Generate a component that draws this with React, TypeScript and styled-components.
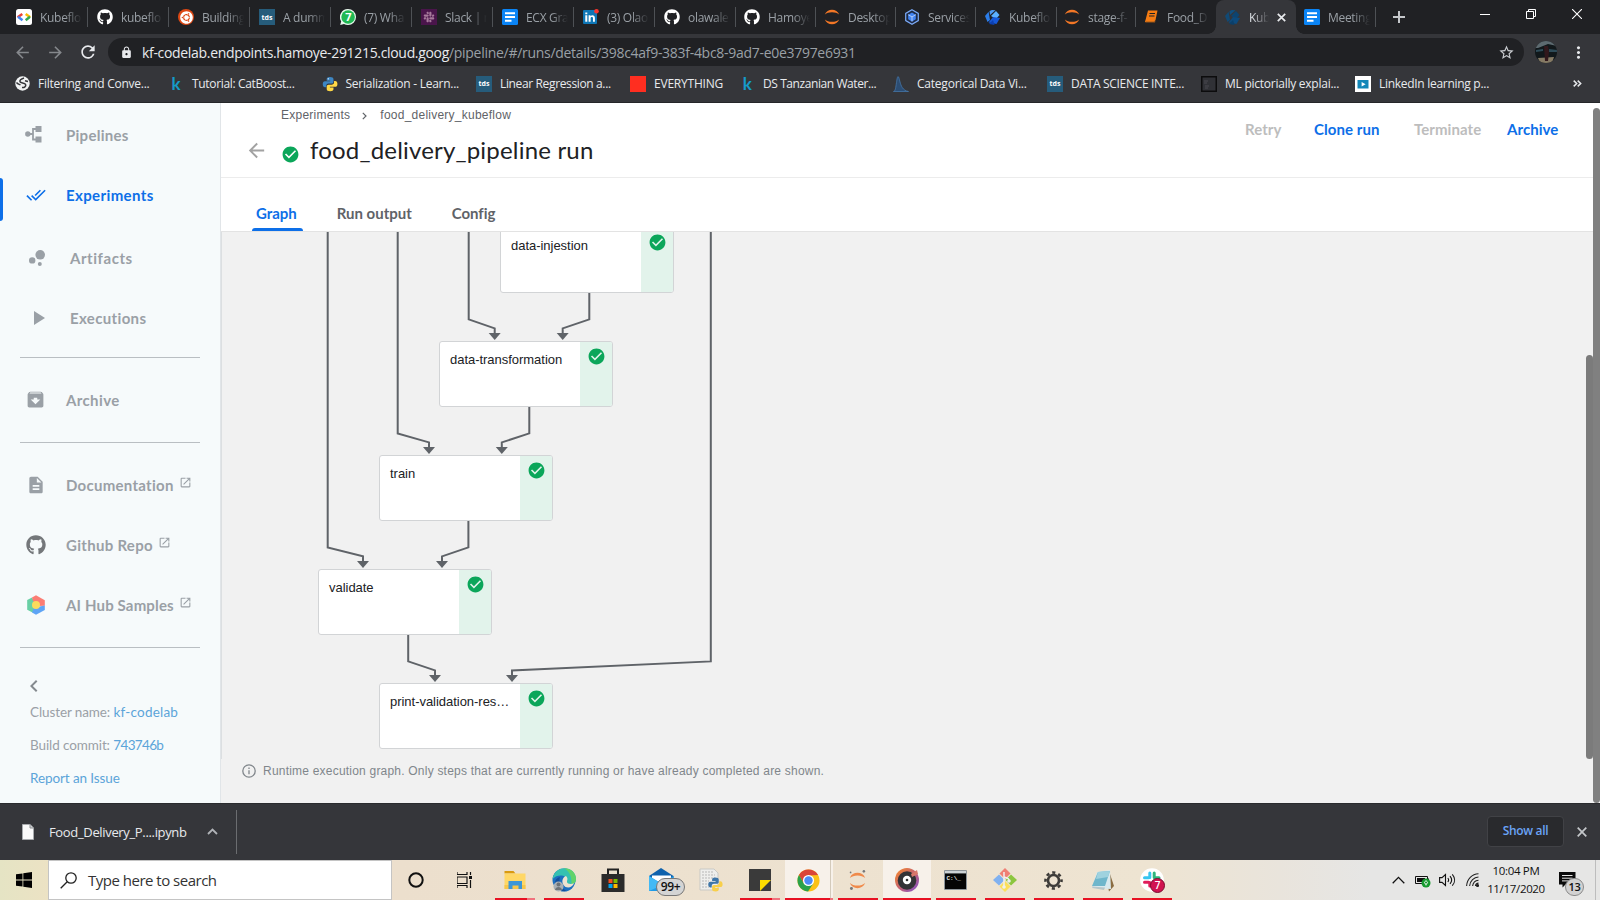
import React from "react";
import styled, { createGlobalStyle, css } from "styled-components";
import { FaGithub, FaUbuntu, FaSlack } from "react-icons/fa";
import {
  MdDoneAll, MdBubbleChart, MdPlayArrow, MdArchive, MdDescription, MdOpenInNew, MdCheckCircle,
  MdArrowBack, MdArrowForward, MdRefresh, MdLock, MdStarBorder, MdChevronLeft, MdMoreVert,
} from "react-icons/md";

const UI = `"Open Sans", "Noto Sans", sans-serif`;
const BRAND = `Lato, sans-serif`;
const BODY = `"Liberation Sans", Arial, sans-serif`;

const Global = createGlobalStyle`
  * { box-sizing: border-box; }
  body { margin: 0; overflow: hidden; background: #fff; }
  svg { display: block; flex: none; }
`;

const Screen = styled.div`
  width: 1600px;
  height: 900px;
  display: flex;
  flex-direction: column;
  overflow: hidden;
  white-space: nowrap;
  font-family: ${UI};
`;

/* ---------- browser chrome ---------- */

const TabStrip = styled.div`
  height: 34px;
  flex: none;
  display: flex;
  background: #202124;
  padding-left: 8px;
`;

const TabItem = styled.div<{ $wide?: boolean; $active?: boolean }>`
  position: relative;
  width: ${p => (p.$wide ? 81 : 80)}px;
  flex: none;
  display: flex;
  align-items: center;
  gap: 8px;
  padding-left: 8px;
  color: ${p => (p.$active ? "#dee1e6" : "#9aa0a6")};
  font-size: 12px;
  letter-spacing: -0.3px;
  ${p => p.$active && css`
    background: #35363a;
    border-radius: 8px 8px 0 0;
    &::before, &::after {
      content: "";
      position: absolute;
      bottom: 0;
      width: 8px;
      height: 8px;
    }
    &::before { left: -8px; background: radial-gradient(circle at 0 0, #202124 7.5px, #35363a 8px); }
    &::after { right: -8px; background: radial-gradient(circle at 100% 0, #202124 7.5px, #35363a 8px); }
  `}
`;

const TabRule = styled.span`
  width: 1px;
  height: 20px;
  flex: none;
  margin-left: -3px;
  background: #4e5155;
`;

const TabTitle = styled.span<{ $w: number }>`
  width: ${p => p.$w}px;
  flex: none;
  mask-image: linear-gradient(to right, #000 ${p => p.$w - 17}px, transparent ${p => p.$w}px);
`;

const NewTab = styled.div`
  display: flex;
  align-items: center;
  margin-left: 17px;
`;

const WindowButtons = styled.div`
  display: flex;
  gap: 36px;
  margin-left: auto;
  margin-right: 18px;
  padding-top: 9px;
`;

const Toolbar = styled.div`
  height: 32px;
  flex: none;
  display: flex;
  align-items: center;
  padding: 4px 0 0 13px;
  background: #35363a;
`;

const NavIcons = styled.div`
  width: 95px;
  display: flex;
  align-items: center;
  gap: 14px;
  color: #85888c;
  & > :last-child { color: #e8eaed; margin-left: -1px; }
`;

const Omnibox = styled.div`
  width: 1416px;
  height: 28px;
  display: flex;
  align-items: center;
  padding: 0 9px 0 12px;
  border-radius: 14px;
  background: #202124;
  color: #e8eaed;
`;

const Host = styled.span`
  margin-left: 9px;
  font-size: 14px;
  letter-spacing: -0.323px;
  color: #e8eaed;
`;

const Path = styled.span`
  flex: 1;
  font-size: 14px;
  letter-spacing: -0.29px;
  color: #9aa0a6;
`;

const Avatar = styled.span`
  width: 22px;
  height: 22px;
  margin: 0 12px 0 11px;
  border-radius: 50%;
  overflow: hidden;
`;

const Bookmarks = styled.div`
  height: 37px;
  flex: none;
  display: flex;
  align-items: center;
  background: #35363a;
  border-bottom: 1px solid #252629;
  padding: 0 0 1px 14px;
  color: #e8eaed;
`;

const Bookmark = styled.div<{ $w: number; $ls: number }>`
  width: ${p => p.$w}px;
  display: flex;
  align-items: center;
  gap: 8px;
  font-size: 12px;
  letter-spacing: ${p => p.$ls}px;
`;

const Overflow = styled.div`
  margin-left: auto;
  margin-right: 18px;
`;

/* ---------- favicons made of simple boxes ---------- */

const Tile = styled.span<{ $bg: string; $fg?: string; $round?: number }>`
  width: 16px;
  height: 16px;
  flex: none;
  display: flex;
  align-items: center;
  justify-content: center;
  border-radius: ${p => p.$round ?? 0}px;
  background: ${p => p.$bg};
  color: ${p => p.$fg ?? "#fff"};
  font-size: 7px;
  font-weight: 700;
  letter-spacing: 0;
  line-height: 1;
`;

const Kaggle = styled.span`
  width: 16px;
  flex: none;
  text-align: center;
  font: 700 17px/16px ${BRAND};
  color: #159bc9;
`;

/* ---------- page ---------- */

const Page = styled.div`
  height: 701px;
  flex: none;
  display: flex;
  border-bottom: 1px solid #2a2b2e;
`;

const Sidebar = styled.nav`
  width: 221px;
  flex: none;
  padding-top: 2px;
  background: #f6fafb;
  border-right: 1px solid #e1e5e8;
  font-family: ${BRAND};
`;

const NavItem = styled.div<{ $active?: boolean; $indent?: boolean; $top?: number; $ls?: number }>`
  position: relative;
  height: 60px;
  margin-top: ${p => p.$top ?? 0}px;
  display: flex;
  align-items: center;
  padding: 0 0 1px ${p => (p.$indent ? 30 : 26)}px;
  font-size: 15px;
  font-weight: 700;
  letter-spacing: ${p => p.$ls ?? 0.27}px;
  color: ${p => (p.$active ? "#0d6fe8" : "#9aa0a6")};
  ${p => p.$active && css`
    &::before {
      content: "";
      position: absolute;
      left: 0;
      top: 13px;
      width: 3px;
      height: 43px;
      border-radius: 0 4px 4px 0;
      background: #0d6fe8;
    }
  `}
`;

const NavGlyph = styled.span<{ $pull?: number }>`
  width: ${p => 20 + (p.$pull ?? 0)}px;
  height: 20px;
  margin-right: 20px;
  margin-left: ${p => -(p.$pull ?? 0)}px;
  padding-right: ${p => p.$pull ?? 0}px;
  display: flex;
  align-items: center;
  justify-content: center;
`;

const External = styled.span`
  margin: -5px 0 0 5px;
`;

const Rule = styled.div<{ $top: number }>`
  width: 180px;
  height: 1px;
  margin: ${p => p.$top}px 0 0 20px;
  background: #b9bec2;
`;

const Collapse = styled.div`
  height: 24px;
  margin: 26px 0 0 22px;
  color: #858a8f;
`;

const Meta = styled.div<{ $ls?: number }>`
  height: 33px;
  padding-left: 30px;
  font-size: 13.5px;
  line-height: 29px;
  letter-spacing: -0.1px;
  color: #9aa0a6;
  a { color: #5ba4d9; letter-spacing: ${p => p.$ls ?? -0.1}px; }
`;

const Main = styled.main`
  width: 1372px;
  flex: none;
  display: flex;
  flex-direction: column;
  background: #fff;
`;

const Header = styled.header`
  height: 75px;
  display: flex;
  justify-content: space-between;
  border-bottom: 1px solid #ececec;
`;

const Heading = styled.div`
  padding-left: 24px;
`;

const Crumbs = styled.div`
  height: 25px;
  display: flex;
  align-items: center;
  padding-left: 36px;
  font: 12px/25px ${BODY};
  letter-spacing: 0.24px;
  color: #5f6368;
  svg { margin: 0 13px 0 12px; }
`;

const TitleRow = styled.div`
  height: 44px;
  display: flex;
  align-items: center;
  color: #a2a2a2;
`;

const Status = styled.span`
  margin: 8px 10px 0 13px;
  color: #0ba65a;
`;

const Title = styled.h1`
  margin: 0;
  font: 400 24px/30px ${BRAND};
  letter-spacing: 0.19px;
  color: #202124;
`;

const Actions = styled.div`
  display: flex;
  padding-right: 34px;
`;

const Action = styled.span<{ $off?: boolean; $w: number }>`
  width: ${p => p.$w}px;
  font: 700 15px/52px ${BRAND};
  letter-spacing: 0.06px;
  color: ${p => (p.$off ? "#bdbdbd" : "#0d6fe8")};
`;

const Tabs = styled.div`
  height: 54px;
  display: flex;
  align-items: flex-end;
  gap: 31px;
  padding-left: 31px;
  border-bottom: 1px solid #e3e3e3;
`;

const PageTab = styled.span<{ $active?: boolean }>`
  position: relative;
  height: 36px;
  padding: 0 5px 0 4px;
  font: 700 15px/37px ${BRAND};
  letter-spacing: -0.02px;
  color: ${p => (p.$active ? "#0d6fe8" : "#5f6368")};
  ${p => p.$active && css`
    &::after {
      content: "";
      position: absolute;
      left: 0;
      right: -1px;
      bottom: 0;
      height: 3px;
      border-radius: 3px 3px 0 0;
      background: #0d6fe8;
    }
  `}
`;

const GraphPane = styled.section`
  flex: 1;
  display: flex;
  flex-direction: column;
  background: #f1f1f1;
`;

const Canvas = styled.div`
  position: relative;
  height: 527px;
  overflow: hidden;
  border-left: 1px solid #dcdfe1;
`;

const Node = styled.div<{ $x: number; $y: number }>`
  position: absolute;
  left: ${p => p.$x}px;
  top: ${p => p.$y}px;
  width: 174px;
  height: 66px;
  display: flex;
  justify-content: space-between;
  border: 1px solid #d2d4d6;
  border-radius: 3px;
  background: #fff;
  overflow: hidden;
`;

const NodeName = styled.span`
  padding: 9px 0 0 10px;
  font: 13px/18px ${BODY};
  letter-spacing: -0.03px;
  color: #202124;
`;

const NodeState = styled.span`
  width: 32px;
  padding: 4.5px 0 0 6.5px;
  background: #e2f3eb;
  color: #0ba65a;
`;

const Note = styled.div`
  display: flex;
  align-items: center;
  gap: 7px;
  height: 24px;
  padding-left: 21px;
  font: 12px/24px ${BODY};
  letter-spacing: 0.21px;
  color: #80868b;
`;

const Gutter = styled.div<{ $top: number; $h: number; $c: string }>`
  width: 7px;
  height: ${p => p.$h}px;
  flex: none;
  margin-top: ${p => p.$top}px;
  border-radius: 4px;
  background: ${p => p.$c};
`;

const InnerScroll = styled(Gutter)`
  position: absolute;
  right: 0;
  top: 0;
`;

/* ---------- download shelf ---------- */

const Shelf = styled.div`
  height: 56px;
  flex: none;
  display: flex;
  align-items: center;
  background: #35363a;
  padding: 0 0 1px 22px;
  color: #e8eaed;
`;

const FileName = styled.span`
  width: 158px;
  margin-left: 15px;
  font-size: 13px;
  letter-spacing: -0.34px;
`;

const ShelfRule = styled.span`
  width: 1px;
  height: 44px;
  margin-left: 18px;
  background: #6b6d70;
`;

const ShowAll = styled.span`
  width: 77px;
  height: 31px;
  margin: 0 13px 0 auto;
  border: 1px solid #414246;
  border-radius: 4px;
  background: #292a2d;
  text-align: center;
  font-size: 12px;
  font-weight: 600;
  line-height: 28px;
  letter-spacing: -0.3px;
  color: #6ba4f7;
`;

const ShelfClose = styled.span`
  margin-right: 13px;
`;

/* ---------- taskbar ---------- */

const Taskbar = styled.div`
  height: 40px;
  flex: none;
  display: flex;
  background: linear-gradient(to right, #e5e4c4 0, #ece2c4 48px, #ecdfcd 400px, #eee4d2 1150px, #e9e4dc 1280px, #e6e6e5 1370px);
`;

const Start = styled.div`
  width: 48px;
  display: flex;
  align-items: center;
  justify-content: center;
`;

const SearchBox = styled.div`
  width: 344px;
  display: flex;
  align-items: center;
  gap: 11px;
  padding-left: 11px;
  border: 1px solid #c4c4c4;
  background: #fff;
  font-size: 15px;
  letter-spacing: -0.5px;
  color: #333;
`;

const Apps = styled.div`
  display: flex;
`;

const AppCell = styled.div<{ $w?: number; $lit?: boolean }>`
  position: relative;
  width: ${p => p.$w ?? 49}px;
  display: flex;
  align-items: center;
  justify-content: center;
  ${p => p.$lit && css`background: linear-gradient(to right, transparent 1px, #f7f1ea 1px);`}
`;

const Running = styled.span<{ $wide?: boolean; $more?: boolean }>`
  position: absolute;
  bottom: 0;
  left: ${p => (p.$wide ? 1 : 5)}px;
  width: ${p => (p.$wide ? 48 : 40)}px;
  height: 2px;
  background: linear-gradient(to right, #e81123 ${p => (p.$more ? (p.$wide ? 93 : 80) : 100)}%, #f0727d ${p => (p.$more ? (p.$wide ? 93 : 80) : 100)}%);
`;

const StackEdge = styled.span`
  position: absolute;
  right: 2px;
  top: 0;
  width: 1px;
  height: 38px;
  background: #d3cabb;
`;

const Pill = styled.span<{ $x: number; $y: number; $w: number; $h: number; $bg: string; $fg: string; $line: string; $fs: number }>`
  position: absolute;
  left: ${p => p.$x}px;
  top: ${p => p.$y}px;
  width: ${p => p.$w}px;
  height: ${p => p.$h}px;
  border: 1px solid ${p => p.$line};
  border-radius: 10px;
  background: ${p => p.$bg};
  color: ${p => p.$fg};
  text-align: center;
  font-size: ${p => p.$fs}px;
  font-weight: 600;
  line-height: ${p => p.$h - 2}px;
  letter-spacing: -0.3px;
`;

const Tray = styled.div`
  position: relative;
  display: flex;
  align-items: center;
  margin-left: auto;
  padding-right: 19px;
`;

const Clock = styled.div`
  width: 60px;
  margin: 0 13px 0 7px;
  text-align: center;
  font-size: 11.5px;
  line-height: 18px;
  letter-spacing: -0.33px;
  color: #111;
`;

const DesktopEdge = styled.span`
  width: 1px;
  margin-right: 4px;
  background: #bdbdbd;
`;

/* ---------- drawings ---------- */

const Docs = () => (
  <svg width="16" height="16" viewBox="0 0 16 16"><rect width="16" height="16" rx="1.5" fill="#0a84f5" /><path d="M3 4.2h10M3 8h10M3 11.8h6.5" stroke="#fff" strokeWidth="1.9" /></svg>
);
const Jupyter = ({ s = 16, dots = false }) => (
  <svg width={s} height={s} viewBox="0 0 16 16" overflow="visible">
    <path d="M.8 5.6C2 2.4 4.800.8 8 .8s6 1.600 7.200 4.800C13.400 4 11 3.200 8 3.200S2.600 4 .8 5.600zM.8 10.400C2 13.600 4.800 15.200 8 15.200s6-1.600 7.200-4.800C13.400 12 11 12.800 8 12.800S2.600 12 .8 10.400z" fill={dots ? "#f08a4b" : "#f37726"} />
    {dots && <g fill="#76777a"><circle cx="14" cy="-.6" r="1.200" /><circle cx="1.500" cy=".4" r=".8" /><circle cx="2.300" cy="15.600" r="1.400" /></g>}
  </svg>
);
const Kubeflow = ({ dim = false }) => (
  <svg width="17" height="17" viewBox="0 0 17 17">
    <path d="M8 1l3.500.3L6 6 5.500 2z" fill={dim ? "#0f4f80" : "#4d9bf5"} />
    <path d="M1 7l3.600-4.300L6 11 3.500 13z" fill={dim ? "#114a75" : "#2b7de9"} />
    <path d="M7 7l5-5 3.500 4L12 10z" fill={dim ? "#0c4471" : "#5cb0ff"} />
    <path d="M4.500 13.500L9 8l7 1-3.500 6z" fill={dim ? "#0d4a7c" : "#1658d8"} />
    <path d="M5 15l4-4 1.500 5z" fill={dim ? "#0b3f69" : "#0c3fb0"} />
  </svg>
);
const CloudMark = () => (
  <svg width="16" height="16" viewBox="0 0 16 16"><rect width="16" height="16" rx="2.500" fill="#fff" />
    <g fill="none" strokeWidth="2.500"><path d="M1.600 8.200L6.300 5" stroke="#ea4335" /><path d="M2 7.800L6.500 11.200" stroke="#4285f4" /><path d="M9.700 5l4.500 3.300" stroke="#fbbc04" /><path d="M14 7.800l-4.300 3.400" stroke="#34a853" /></g></svg>
);
const LinkedIn = () => (
  <svg width="16" height="16" viewBox="0 0 16 16"><rect y="1" width="14" height="14" rx="1" fill="#0e76b5" />
    <path d="M2.300 6.300h2v6.400h-2zM2.300 3.400h2v1.900h-2zM5.600 6.300h1.900v1C8.600 5.700 11.900 5.700 11.900 9v3.700H10V9.300c0-1.900-2.400-1.800-2.400 0v3.400h-2z" fill="#fff" /><circle cx="13.500" cy="2.300" r="2.300" fill="#f5352f" /></svg>
);
const Services = () => (
  <svg width="16" height="16" viewBox="0 0 16 16"><path d="M8 .8l6.300 3.600v7.200L8 15.200l-6.300-3.600V4.400z" fill="#1d2a44" stroke="#7baaf7" strokeWidth="1.200" /><path d="M8 3.500l3.800 2.200v4.500L8 12.500l-3.800-2.300V5.700z" fill="#4285f4" /><path d="M4.200 5.700L8 7.900l3.800-2.200M8 7.900v4.600" stroke="#aecbfa" fill="none" /></svg>
);
const Notebook = () => (
  <svg width="15" height="16" viewBox="0 0 15 16"><path d="M4 1.500h9.500L11 13.500H2.200c-1.500 0-1.500-1.800-.8-2z" fill="#f57c13" /><path d="M5.500 4.500h5.500M5 7h5.500" stroke="#202124" strokeWidth="1" /><path d="M1.500 13.200h9.300l.7-2" stroke="#202124" fill="none" strokeWidth=".6" /></svg>
);
const WhatsApp = () => (
  <svg width="16" height="16" viewBox="0 0 16 16"><path d="M8 0a8 8 0 0 1 0 16c-1.500 0-2.800-.4-4-1L.2 16l1-3.700A8 8 0 0 1 8 0z" fill="#e9f9ee" /><circle cx="8.100" cy="8" r="6.800" fill="#20b954" /><text x="8.200" y="12" textAnchor="middle" fontSize="11" fontWeight="700" fontFamily="Open Sans" fill="#fff">7</text></svg>
);
const GlobeMark = () => (
  <svg width="15" height="15" viewBox="0 0 15 15"><circle cx="7.500" cy="7.500" r="7.200" fill="#f1f3f4" /><path d="M9 2C6.500 2.800 4.500 4 5 5.700s4.800.8 5.600 2.800-1.400 3.300-3.600 3M1.500 6.500c1.500 1.800 3 1.700 4 2.500M10 4.800l3 .7" fill="none" stroke="#35363a" strokeWidth="1.500" /></svg>
);
const PythonMark = ({ s = 17 }) => (
  <svg width={s} height={s} viewBox="0 0 17 17"><path d="M8.400 1C5.500 1 5 2.200 5 3.400V5h3.800v.7H3.200C1.500 5.700.8 7 .8 8.800s1 3.200 2.400 3.200h1.400v-1.700c0-1.500 1-2.300 2.400-2.300h3.200c1.200 0 2-.9 2-2V3.400C12.200 1.800 10.900 1 8.400 1z" fill="#3e86c2" /><path d="M8.800 16.200c2.900 0 3.400-1.200 3.400-2.400v-1.600H8.400v-.7H14c1.700 0 2.400-1.300 2.400-3.100S15.400 5.200 14 5.200h-1.200v1.700c0 1.500-1.200 2.300-2.600 2.300H7c-1.200 0-2 .9-2 2v2.600c0 1.600 1.300 2.400 3.800 2.400z" fill="#ffd845" /><circle cx="6.700" cy="3" r=".7" fill="#fff" /></svg>
);
const Curve = () => (
  <svg width="16" height="16" viewBox="0 0 16 16"><path d="M.5 15.500c2-.5 2.200-4 3-9C4 3 4.400.5 5 .5c.8 0 1.200 2.500 2 5.500 1 3.500 2.500 8.500 8.500 9.500z" fill="#2c4d73" stroke="#4576a8" strokeWidth=".8" /></svg>
);
const DarkTile = () => (
  <svg width="16" height="16" viewBox="0 0 16 16"><rect x=".75" y=".75" width="14.500" height="14.500" fill="#303136" stroke="#0c0c0d" strokeWidth="1.500" /><path d="M3 5h4M3 7h3M4 10h4M4 12h3" stroke="#4a4b50" /></svg>
);
const Learning = () => (
  <svg width="16" height="16" viewBox="0 0 16 16"><rect width="16" height="16" fill="#fff" /><rect x="2.500" y="4" width="11" height="8.500" fill="#1287b8" /><path d="M6.600 6l4 2.200-4 2.200z" fill="#fff" /></svg>
);

const PipelinesIcon = () => (
  <svg width="17" height="17" viewBox="0 0 17 17" fill="#9aa0a6"><circle cx="2.800" cy="8" r="2.700" /><rect x="10.500" y="0" width="6" height="6" /><rect x="10.500" y="10.500" width="6" height="6" /><path d="M4 8h4M11 3H8v10.500h3" stroke="#9aa0a6" strokeWidth="1.800" fill="none" /></svg>
);
const HubIcon = () => (
  <svg width="20" height="20" viewBox="0 0 20 20"><path d="M1.200 5L6 2.500 9 8v6l-2.500 3.500L1.200 14.800z" fill="#68cfa4" /><path d="M6 2.500L10 .3l8.800 5v5.500L13 11 7 6z" fill="#fb7d74" /><path d="M18.800 10.500V15L10 19.800l-4-2.400 2-5z" fill="#5ea4f5" /><circle cx="10" cy="10" r="4" fill="#fbdb5c" /></svg>
);
const InfoIcon = () => (
  <svg width="14" height="14" viewBox="0 0 14 14" fill="none" stroke="#80868b" strokeWidth="1.300"><circle cx="7" cy="7" r="6.200" /><path d="M7 6.200v4M7 3.600v1.400" /></svg>
);

/* ---------- data ---------- */

const GH = <FaGithub size={16} color="#fff" />;
const TDS = <Tile $bg="#265c7b">tds</Tile>;

const tabs: { t: string; i: React.ReactNode }[] = [
  { t: "Kubeflo", i: <CloudMark /> },
  { t: "kubeflo", i: GH },
  { t: "Building", i: <Tile $bg="#dd4814" $round={8}><FaUbuntu size={13} /></Tile> },
  { t: "A dumm", i: TDS },
  { t: "(7) Wha", i: <WhatsApp /> },
  { t: "Slack | r", i: <Tile $bg="#4a154b" $fg="#a77a9c"><FaSlack size={12} /></Tile> },
  { t: "ECX Gra", i: <Docs /> },
  { t: "(3) Olao", i: <LinkedIn /> },
  { t: "olawale", i: GH },
  { t: "Hamoye", i: GH },
  { t: "Desktop", i: <Jupyter /> },
  { t: "Services", i: <Services /> },
  { t: "Kubeflo", i: <Kubeflow /> },
  { t: "stage-f-", i: <Jupyter /> },
  { t: "Food_D", i: <Notebook /> },
  { t: "Kub", i: <Kubeflow dim /> },
  { t: "Meeting", i: <Docs /> },
];

const bookmarks: { t: string; i: React.ReactNode; w: number; ls: number }[] = [
  { t: "Filtering and Conve...", i: <Tile $bg="transparent"><GlobeMark /></Tile>, w: 154, ls: -0.25 },
  { t: "Tutorial: CatBoost...", i: <Kaggle>k</Kaggle>, w: 153.5, ls: -0.334 },
  { t: "Serialization - Learn...", i: <PythonMark s={16} />, w: 154.5, ls: -0.256 },
  { t: "Linear Regression a...", i: TDS, w: 154, ls: -0.36 },
  { t: "EVERYTHING", i: <Tile $bg="#ff2e20" />, w: 109, ls: -0.217 },
  { t: "DS Tanzanian Water...", i: <Kaggle>k</Kaggle>, w: 154, ls: -0.42 },
  { t: "Categorical Data Vi...", i: <Curve />, w: 154, ls: -0.22 },
  { t: "DATA SCIENCE INTE...", i: TDS, w: 154, ls: -0.313 },
  { t: "ML pictorially explai...", i: <DarkTile />, w: 154, ls: -0.25 },
  { t: "LinkedIn learning p...", i: <Learning />, w: 154, ls: -0.29 },
];

/* positions inside the graph canvas */
const nodes = [
  { x: 278, y: -5, t: "data-injestion" },
  { x: 217, y: 109, t: "data-transformation" },
  { x: 157, y: 223, t: "train" },
  { x: 96, y: 337, t: "validate" },
  { x: 157, y: 451, t: "print-validation-res…" },
];
const edges: [number, number, number, number][] = [
  [105.700, -2, 315, 141],
  [175.700, -2, 201, 207],
  [246.700, -2, 87, 272.700],
  [367.300, 61, 87, 340.700],
  [307.300, 175, 201, 279.800],
  [246.400, 289, 315, 220],
  [186.200, 403, 429, 213],
  [488.800, -2, 429, 290],
];

const GraphEdges = () => (
  <svg width="700" height="526" viewBox="0 0 700 526" fill="none" stroke="#5f6368" strokeWidth="2">
    {edges.map(([x, y0, y1, x2], i) => (
      <g key={i}>
        <path d={`M${x} ${y0}V${y1 + .4}L${x2} ${y1 + 9.400}V${y1 + 16}`} />
        <path d={`M${x2 - 6} ${y1 + 14}h12l-6 7z`} fill="#5f6368" stroke="none" />
      </g>
    ))}
  </svg>
);

const apps: { i: React.ReactNode; run?: boolean; more?: boolean; lit?: boolean; wide?: boolean }[] = [
  { run: true, more: true, i: <svg width="22" height="19" viewBox="0 0 22 19"><path d="M.5 0h9l2 2.500H.5z" fill="#d99a10" /><path d="M.5 2.500h21V18H.5z" fill="#ffd766" /><path d="M.5 14h21v4H.5z" fill="#f7c64b" /><path d="M4.500 18v-8h13.500v8h-3.500v-3.500h-6V18z" fill="#3c96d8" /></svg> },
  { run: true, i: <svg width="24" height="24" viewBox="0 0 24 24"><circle cx="12" cy="12" r="11.500" fill="#1b6fc0" /><path d="M.6 11C2 3.500 7 .3 12.500.3 19 .3 24 5 24 11c0 5-4.500 6-8 5-2-.6-1-2-.8-3.500C15.400 7.500 6 5 .6 11z" fill="#35c1b1" /><path d="M12 .3C19 .3 24 5 24 11c0 3-2 5-4.500 5.300C20 8 17 3 12 .3z" fill="#62d36a" /><path d="M14 8c2.500 2.500 1 4.500 1 6s3.500 3 7 1.300C20.500 20 14 21 11.500 17S11 9 14 8z" fill="#ede2d0" /><path d="M3 15c0-3.500 2-5.500 5-6-1.500 4 0 10 6.500 14C8 24 3 20 3 15z" fill="#134f9c" /><circle cx="6.500" cy="18.500" r="5" fill="#a9b0b5" /><circle cx="6.500" cy="16.500" r="2" fill="#6d7377" /><path d="M3 22c.5-4 6.500-4 7 0z" fill="#6d7377" /></svg> },
  { i: <svg width="24" height="24" viewBox="0 0 24 24"><path d="M7 7V1.500h10V7" fill="none" stroke="#222" strokeWidth="2" /><path d="M.5 6h23v18H.5z" fill="#2b2b2b" /><path d="M7.500 11h4v4h-4z" fill="#f25022" /><path d="M12.500 11h4v4h-4z" fill="#7fba00" /><path d="M7.500 16h4v4h-4z" fill="#00a4ef" /><path d="M12.500 16h4v4h-4z" fill="#ffb900" /></svg> },
  { i: <><svg width="25" height="24" viewBox="0 0 25 24"><path d="M0 8L12 0l12.500 8v3H0z" fill="#0f62ad" /><path d="M3 7.500h19V14H3z" fill="#fff" /><path d="M0 8l12.500 7.500L24.500 8v15H0z" fill="#1e9be8" /><path d="M0 23V8l14 9z" fill="#43b9f5" /></svg><Pill $x={19} $y={18} $w={29} $h={18} $bg="#d4d4d4" $fg="#111" $line="#777" $fs={12}>99+</Pill></> },
  { i: <svg width="24" height="24" viewBox="0 0 24 24"><path d="M1 1h14l4 4v17H1z" fill="#eeeeec" stroke="#c9c9c5" /><path d="M3 4h11M3 7h13M3 10h13M3 13h7M3 16h6M3 19h7" stroke="#b7b7b7" strokeDasharray="2 1" /><g transform="translate(8.500 8.500) scale(.92)"><path d="M8.400 1C5.500 1 5 2.200 5 3.400V5h3.800v.7H3.200C1.500 5.700.8 7 .8 8.800s1 3.200 2.400 3.200h1.400v-1.700c0-1.500 1-2.300 2.400-2.300h3.200c1.200 0 2-.9 2-2V3.400C12.200 1.800 10.900 1 8.400 1z" fill="#3f76a8" /><path d="M8.800 16.200c2.900 0 3.400-1.200 3.400-2.400v-1.600H8.400v-.7H14c1.700 0 2.400-1.300 2.400-3.100S15.400 5.200 14 5.200h-1.200v1.700c0 1.500-1.200 2.300-2.600 2.300H7c-1.200 0-2 .9-2 2v2.600c0 1.600 1.300 2.400 3.800 2.400z" fill="#f8cf4a" /></g></svg> },
  { run: true, more: true, i: <svg width="22" height="22" viewBox="0 0 22 22"><path d="M0 0h22v22H0z" fill="#3a3a3a" /><path d="M11 22V11h11z" fill="#fddc00" /></svg> },
  { run: true, lit: true, more: true, wide: true, i: <><svg width="23" height="23" viewBox="0 0 24 24"><circle cx="12" cy="12" r="11.500" fill="#fbc116" /><path d="M2.040 6.250A11.500 11.500 0 0 1 21.960 6.250L12 6.800 7 14.900z" fill="#da4437" /><path d="M2.040 6.250A11.500 11.500 0 0 0 11.500 23.500L17 15 7 14.900z" fill="#2ba24c" /><circle cx="12" cy="12" r="5.800" fill="#fff" /><circle cx="12" cy="12" r="4.400" fill="#4c8bf5" /></svg><StackEdge /></> },
  { run: true, i: <Jupyter s={17} dots /> },
  { run: true, lit: true, wide: true, i: <svg width="24" height="24" viewBox="0 0 24 24"><defs><linearGradient id="disc" x1="0" y1="0" x2="1" y2="1"><stop offset="0" stopColor="#fb8b24" /><stop offset=".55" stopColor="#c0607a" /><stop offset="1" stopColor="#7a4fd0" /></linearGradient></defs><circle cx="12" cy="12" r="12" fill="url(#disc)" /><circle cx="12" cy="12.500" r="9.300" fill="#333336" /><path d="M16 6l6-4 1 4-6 3z" fill="#d9786a" /><circle cx="12" cy="12" r="4.200" fill="#fff" /><circle cx="12" cy="12" r="1.300" fill="#333" /></svg> },
  { run: true, i: <svg width="23" height="20" viewBox="0 0 23 20"><rect width="23" height="20" rx="1" fill="#8d9499" /><rect x="1" y="1" width="21" height="2.500" fill="#cdd3d6" /><rect x="1" y="3.500" width="21" height="15.500" fill="#050505" /><text x="2.500" y="10" fontSize="6" fontFamily="Liberation Mono" fontWeight="700" fill="#e8e8e8">C:\_</text></svg> },
  { run: true, i: <svg width="24" height="24" viewBox="0 0 24 24"><path d="M12 0l5.500 5.500L12 11 6.500 5.500z" fill="#f07f74" /><path d="M18 6.500l6 5.500-6 5.500-5.500-5.500z" fill="#8cc63f" /><path d="M6 6.500l5.500 5.500L6 17.500 0 12z" fill="#80b1f0" /><path d="M12 13l5.500 5.500L12 24l-5.500-5.500z" fill="#fbe05a" /><path d="M11 4v16M11 9c5 1 5 2 5 5" fill="none" stroke="#efefef" strokeWidth="1.500" /><g fill="#efefef"><circle cx="11" cy="19" r="1.800" /><circle cx="16" cy="13" r="1.800" /></g></svg> },
  { run: true, i: <svg width="19" height="19" viewBox="0 0 19 19" fill="none" stroke="#3d3b38"><circle cx="9.500" cy="9.500" r="5.500" strokeWidth="2.600" /><circle cx="9.500" cy="9.500" r="8" strokeWidth="2.600" strokeDasharray="3.140 3.140" strokeDashoffset="1.500" /></svg> },
  { run: true, i: <svg width="24" height="23" viewBox="0 0 24 23"><path d="M18 2l5 15-5 5.500L16 12z" fill="#8b6d42" /><path d="M6 3l13-2 1 19-19-1z" fill="#d9e9ee" /><path d="M7 3l12-1-5 15L1 17z" fill="#6fb6cb" /><path d="M7 3l12-1-2 6-12 2z" fill="#9fd2df" /><path d="M1 17.500l13 1-1 2.500L1.500 19z" fill="#b7c6c9" /></svg> },
  { run: true, i: <><svg width="24" height="24" viewBox="0 0 24 24"><circle cx="12" cy="12" r="11.800" fill="#fff" /><g fill="none" strokeWidth="3" strokeLinecap="round"><path d="M9.800 5v4.500M4.500 9.800h4" stroke="#36c5f0" /><path d="M14.200 5v4.500M15 9.800h4" stroke="#2eb67d" /><path d="M4.500 14.200h4M9.800 14.500V18" stroke="#e01e5a" /><path d="M14.200 14.500V18M15 14.200h4" stroke="#ecb22e" /></g></svg><Pill $x={23} $y={18} $w={15} $h={15} $bg="#d11350" $fg="#fff" $line="#7b0b2f" $fs={10}>7</Pill></> },
];

/* ---------- screen ---------- */

const Ext = () => <External><MdOpenInNew size={13} /></External>;

export default function App() {
  return (
    <Screen>
      <Global />
      <TabStrip>
        {tabs.map((tab, i) => (
          <TabItem key={i} $wide={i < 8} $active={i === 15}>
            {tab.i}
            <TabTitle $w={i === 15 ? 20 : 42}>{tab.t}</TabTitle>
            {i === 15 && <svg width="9" height="9" viewBox="0 0 9 9"><path d="M.8.8l7.400 7.400M8.200.8L.8 8.200" stroke="#e8eaed" strokeWidth="1.700" /></svg>}
            {i !== 14 && i !== 15 && <TabRule />}
          </TabItem>
        ))}
        <NewTab><svg width="12" height="12" viewBox="0 0 12 12"><path d="M6 0v12M0 6h12" stroke="#c4c7ca" strokeWidth="2" /></svg></NewTab>
        <WindowButtons>
          <svg width="10" height="10" viewBox="0 0 10 10"><path d="M0 5.500h10" stroke="#fff" /></svg>
          <svg width="10" height="10" viewBox="0 0 10 10" fill="none" stroke="#fff"><path d="M.5 2.500h7v7h-7zM2.500 2.500v-2h7v7h-2" /></svg>
          <svg width="10" height="10" viewBox="0 0 10 10"><path d="M0 0l10 10M10 0L0 10" stroke="#fff" strokeWidth="1.100" /></svg>
        </WindowButtons>
      </TabStrip>

      <Toolbar>
        <NavIcons>
          <MdArrowBack size={19} /><MdArrowForward size={19} /><MdRefresh size={20} />
        </NavIcons>
        <Omnibox>
          <MdLock size={13} />
          <Host>kf-codelab.endpoints.hamoye-291215.cloud.goog</Host>
          <Path>/pipeline/#/runs/details/398c4af9-383f-4bc8-9ad7-e0e3797e6931</Path>
          <MdStarBorder size={17} color="#c9ccd0" />
        </Omnibox>
        <Avatar>
          <svg width="22" height="22" viewBox="0 0 22 22"><rect width="22" height="22" fill="#11181b" /><path d="M0 0h22v5L13 3 3 7H0z" fill="#5d6a70" /><path d="M1 9l7-1v2l-7 1zM14 8l8 1v2h-8z" fill="#2e4b58" /><path d="M3 17l16-1-2 6H5z" fill="#857a64" /><path d="M9 5h4l1 6-1 9h-3z" fill="#31181c" /></svg>
        </Avatar>
        <MdMoreVert size={19} color="#e8eaed" />
      </Toolbar>

      <Bookmarks>
        {bookmarks.map(b => <Bookmark key={b.t} $w={b.w} $ls={b.ls}>{b.i}{b.t}</Bookmark>)}
        <Overflow><svg width="9" height="7" viewBox="0 0 9 7"><path d="M.7.6l3 2.900-3 2.900M4.700.6l3 2.900-3 2.900" fill="none" stroke="#e8eaed" strokeWidth="1.500" /></svg></Overflow>
      </Bookmarks>

      <Page>
        <Sidebar>
          <NavItem><NavGlyph $pull={3}><PipelinesIcon /></NavGlyph>Pipelines</NavItem>
          <NavItem $active $ls={0.38}><NavGlyph><MdDoneAll size={20} /></NavGlyph>Experiments</NavItem>
          <NavItem $indent $top={3} $ls={0.55}><NavGlyph $pull={3}><MdBubbleChart size={24} /></NavGlyph>Artifacts</NavItem>
          <NavItem $indent $ls={0.35}><NavGlyph $pull={2}><MdPlayArrow size={24} /></NavGlyph>Executions</NavItem>
          <Rule $top={9} />
          <NavItem $top={12} $ls={0.37}><NavGlyph $pull={1}><MdArchive size={21} /></NavGlyph>Archive</NavItem>
          <Rule $top={12} />
          <NavItem $top={12}><NavGlyph><MdDescription size={20} /></NavGlyph>Documentation<Ext /></NavItem>
          <NavItem $ls={0.3}><NavGlyph><FaGithub size={20} color="#74777a" /></NavGlyph>Github Repo<Ext /></NavItem>
          <NavItem $ls={0.15}><NavGlyph><HubIcon /></NavGlyph>AI Hub Samples<Ext /></NavItem>
          <Rule $top={12} />
          <Collapse><MdChevronLeft size={24} /></Collapse>
          <Meta $ls={0.2}>Cluster name: <a>kf-codelab</a></Meta>
          <Meta $ls={-0.65}>Build commit: <a>743746b</a></Meta>
          <Meta><a>Report an Issue</a></Meta>
        </Sidebar>

        <Main>
          <Header>
            <Heading>
              <Crumbs>
                Experiments
                <svg width="5" height="8" viewBox="0 0 5 8"><path d="M.8.8L4 4 .8 7.200" fill="none" stroke="#5f6368" strokeWidth="1.200" /></svg>
                food_delivery_kubeflow
              </Crumbs>
              <TitleRow>
                <MdArrowBack size={23} />
                <Status><MdCheckCircle size={19} /></Status>
                <Title>food_delivery_pipeline run</Title>
              </TitleRow>
            </Heading>
            <Actions>
              <Action $off $w={69}>Retry</Action>
              <Action $w={100}>Clone run</Action>
              <Action $off $w={93}>Terminate</Action>
              <Action $w={52}>Archive</Action>
            </Actions>
          </Header>
          <Tabs>
            <PageTab $active>Graph</PageTab>
            <PageTab>Run output</PageTab>
            <PageTab>Config</PageTab>
          </Tabs>
          <GraphPane>
            <Canvas>
              <GraphEdges />
              {nodes.map(n => (
                <Node key={n.t} $x={n.x} $y={n.y}>
                  <NodeName>{n.t}</NodeName>
                  <NodeState><MdCheckCircle size={19} /></NodeState>
                </Node>
              ))}
              <InnerScroll $top={123} $h={404} $c="#7b7b7b" />
            </Canvas>
            <Note><InfoIcon />Runtime execution graph. Only steps that are currently running or have already completed are shown.</Note>
          </GraphPane>
        </Main>
        <Gutter $top={5} $h={695} $c="#808080" />
      </Page>

      <Shelf>
        <svg width="12" height="16" viewBox="0 0 12 16"><path d="M.5.5H8L11.500 4v11.500H.5z" fill="#fafafa" stroke="#a8abae" /><path d="M8 .5V4h3.500" fill="#d0d3d6" stroke="#8d9093" /></svg>
        <FileName>Food_Delivery_P....ipynb</FileName>
        <svg width="11" height="7" viewBox="0 0 11 7"><path d="M1 6l4.500-4.500L10 6" fill="none" stroke="#b0b3b7" strokeWidth="1.800" /></svg>
        <ShelfRule />
        <ShowAll>Show all</ShowAll>
        <ShelfClose><svg width="10" height="10" viewBox="0 0 10 10"><path d="M.7.7l8.600 8.600M9.300.7L.7 9.300" stroke="#c4c7ca" strokeWidth="1.700" /></svg></ShelfClose>
      </Shelf>

      <Taskbar>
        <Start><svg width="16" height="16" viewBox="0 0 16 16"><path d="M0 2.300L6.500 1.400v6.200H0zM7.300 1.300L16 0v7.600H7.300zM0 8.400h6.500v6.200L0 13.700zM7.300 8.400H16V16l-8.700-1.300z" fill="#000" /></svg></Start>
        <SearchBox>
          <svg width="17" height="17" viewBox="0 0 17 17" fill="none" stroke="#222" strokeWidth="1.300"><circle cx="11" cy="6" r="5.200" /><path d="M7.200 9.800L.7 16.300" /></svg>
          Type here to search
        </SearchBox>
        <Apps>
          <AppCell $w={48}><svg width="16" height="16" viewBox="0 0 16 16"><circle cx="8" cy="8" r="6.700" fill="none" stroke="#111" strokeWidth="2" /></svg></AppCell>
          <AppCell $w={50}><svg width="17" height="16" viewBox="0 0 17 16" fill="none" stroke="#111" strokeWidth="1.200"><path d="M0 5h10v6.500H0zM0 0v2.500h10V0M0 16v-2.500h10V16M13.500 0v3M13.500 8v8" /><path d="M12 4h3v3h-3z" fill="#111" stroke="none" /></svg></AppCell>
          {apps.map((a, i) => (
            <AppCell key={i} $lit={a.lit}>
              {a.i}
              {a.run && <Running $wide={a.wide} $more={a.more} />}
            </AppCell>
          ))}
        </Apps>
        <Tray>
          <svg width="13" height="8" viewBox="0 0 13 8"><path d="M.7 7.200l5.800-5.800 5.800 5.800" fill="none" stroke="#111" strokeWidth="1.300" /></svg>
          <svg width="34" height="16" viewBox="-10 0 34 16"><path d="M.5 4.500h12v7H.5zM13.500 6.500v3" fill="none" stroke="#111" /><path d="M2 6h8v4H2z" fill="#111" /><circle cx="11" cy="11" r="4.500" fill="#169b2f" /><path d="M11 13.500V11M11 8.500l1.800 2.300L11 12.500 9.200 10.800z" stroke="#fff" strokeWidth=".8" fill="none" /></svg>
          <svg width="17" height="14" viewBox="0 0 17 14" fill="none" stroke="#111" strokeWidth="1.100"><path d="M.6 4.600h2.400L6.500 1.500v11L3 9.400H.6zM8.800 5c1 1.200 1 2.800 0 4M11 3.200c2 2.300 2 5.300 0 7.600M13.300 1.300c3 3.400 3 8 0 11.400" /></svg>
          <svg width="23" height="14" viewBox="-10 0 23 14" fill="none" stroke="#222" strokeWidth="1.100"><path d="M.6 13C1 6 6 1 12.500.8M3.600 13C4 8 8 4.200 12.500 4M6.600 13c.4-3 2.900-5.500 5.900-5.800M9.400 13c.2-1.400 1.400-2.700 3.100-2.900" /><circle cx="11.500" cy="12.500" r="1" fill="#222" /></svg>
          <Clock>10:04 PM<br />11/17/2020</Clock>
          <svg width="17" height="17" viewBox="0 0 17 17"><path d="M0 0h16.500v12.500H6.500L3.500 15.500v-3H0z" fill="#0a0a0a" /><path d="M3 3.500h10.500M3 6.200h10.500M3 8.900h7" stroke="#e6e6e5" /></svg>
          <Pill $x={173} $y={18} $w={19} $h={18} $bg="#d2d2d2" $fg="#111" $line="#8a8a8a" $fs={11}>13</Pill>
        </Tray>
        <DesktopEdge />
      </Taskbar>
    </Screen>
  );
}
